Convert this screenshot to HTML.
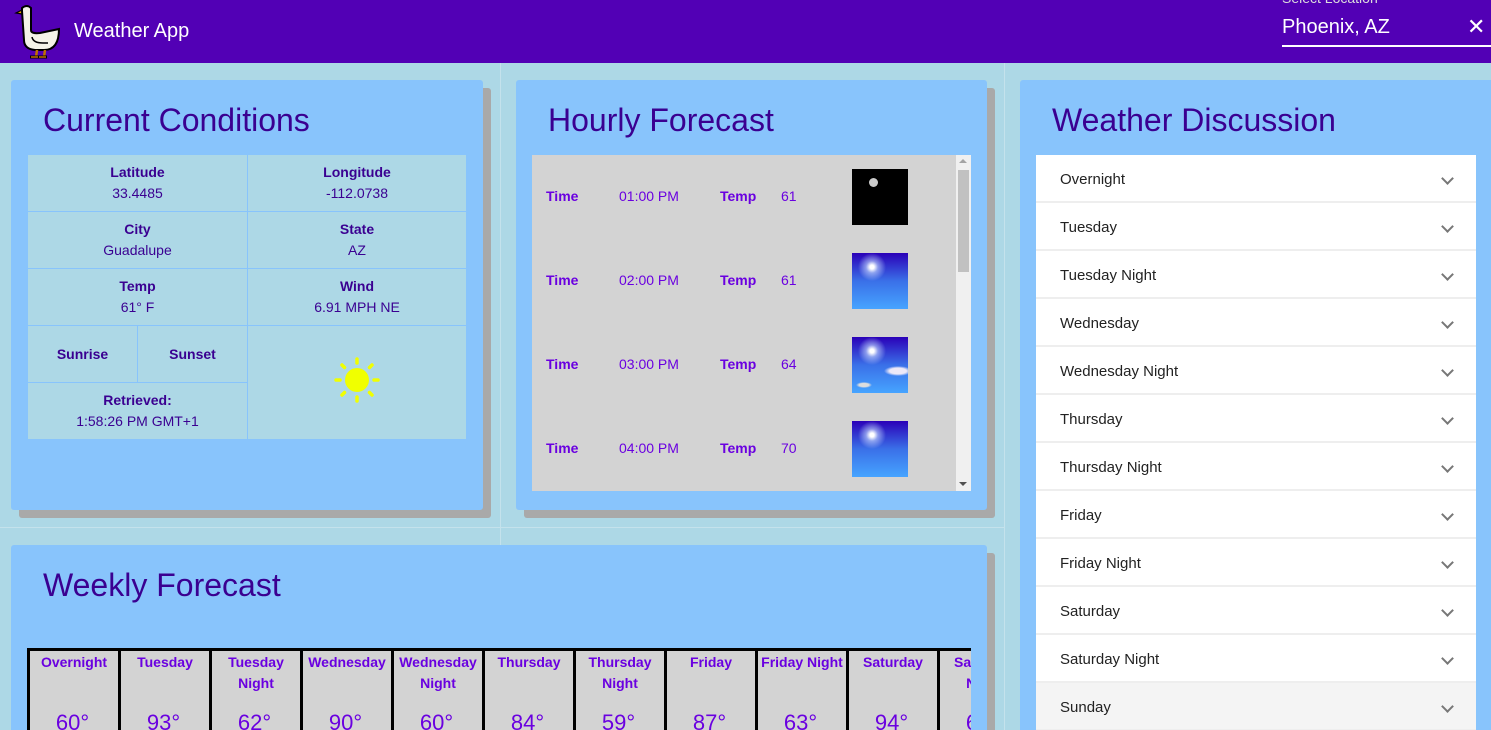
<!DOCTYPE html>
<html><head><style>
*{box-sizing:border-box;margin:0;padding:0}
html,body{width:1491px;height:730px;overflow:hidden}
body{background:#add8e6;font-family:"Liberation Sans",sans-serif;position:relative}
.hdr{position:absolute;left:0;top:0;width:1491px;height:63px;background:#5200b5;color:#fff}
.card{position:absolute;background:#88c4fc;border-radius:3px;box-shadow:8px 8px 0 #a9a9a9}
.card h2{position:absolute;left:32px;top:22px;font-weight:normal;font-size:32px;color:#3a0091}
.line{position:absolute;background:#c4e2ec}
table.cc{position:absolute;left:16px;top:74px;width:440px;border-collapse:collapse;color:#3a0091;font-size:14px;text-align:center}
table.cc td{border:1px solid #88c4fc;background:#add8e6;height:57px;line-height:21px}
b{font-weight:bold}
.hb{position:absolute;left:16px;top:75px;width:439px;height:336px;background:#d3d3d3;overflow:hidden}
.hr{position:absolute;left:0;height:56px;width:420px;font-size:14px;color:#6a00e0}
.hr span{position:absolute;top:19px}
.img{position:absolute;left:320px;top:0;width:56px;height:56px}
.sb{position:absolute;right:0;top:0;width:15px;height:336px;background:#f0f0f0}
.dl{position:absolute;left:16px;top:75px;width:440px;background:#eeeeee}
.di{height:46px;margin-bottom:2px;background:#fff;font-size:15px;color:#222;padding:16px 0 0 24px;position:relative}
.di:after{content:"";position:absolute;right:24px;top:19px;width:7px;height:7px;border-right:2px solid #777;border-bottom:2px solid #777;transform:rotate(45deg)}
.wk{position:absolute;left:16px;top:103px;width:944px;height:100px;overflow:hidden}
.wk table{border-collapse:collapse;background:#d3d3d3;border:3px solid #000}
.wk td{border:3px solid #000;width:91px;min-width:91px;vertical-align:top;text-align:center;color:#6a00e0;font-size:14px;font-weight:bold;line-height:21px;padding-top:1px;height:100px}
.wk td i{display:block;font-style:normal;font-weight:normal;font-size:22px;position:absolute;top:60px;width:85px}
.wk td div{position:relative;height:95px}
</style></head><body>
<div class="hdr">
<svg style="position:absolute;left:14px;top:3px" width="48" height="56" viewBox="0 0 48 56"><path d="M8 7 L2 10 L8 11Z" fill="#e8a000" stroke="#000" stroke-width="1.2"/><path d="M8 5 Q13 1 17 5 L17 27 Q17 31 26 30 L45 26 Q45 47 30 47 L21 47 Q10 46 10 37 L8 8Z" fill="#f4f4e8" stroke="#000" stroke-width="2"/><path d="M18 34 Q19 40 29 40 L34 40" fill="none" stroke="#000" stroke-width="1.5"/><path d="M23 47 L22 54 M31 47 L30 54" stroke="#c07000" stroke-width="2.5"/><path d="M16 54 L25 54 M24 54 L33 54" stroke="#000" stroke-width="3"/><path d="M17 54 L24 54 M25 54 L32 54" stroke="#c07000" stroke-width="1.5"/></svg>
<div style="position:absolute;left:74px;top:20px;font-size:20px">Weather App</div>
<div style="position:absolute;left:1282px;top:-10px;font-size:14px;color:#ddd">Select Location</div>
<div style="position:absolute;left:1282px;top:16px;font-size:20px">Phoenix, AZ</div>
<div style="position:absolute;left:1467px;top:14px;font-size:22px">✕</div>
<div style="position:absolute;left:1282px;top:45px;width:209px;height:2px;background:#fff"></div>
</div>
<div class="line" style="left:500px;top:63px;width:1px;height:667px"></div>
<div class="line" style="left:1004px;top:63px;width:1px;height:667px"></div>
<div class="line" style="left:0;top:527px;width:1004px;height:1px"></div>

<div class="card" style="left:11px;top:80px;width:472px;height:430px">
<h2>Current Conditions</h2>
<table class="cc">
<tr><td colspan="2"><b>Latitude</b><br>33.4485</td><td><b>Longitude</b><br>-112.0738</td></tr>
<tr><td colspan="2"><b>City</b><br>Guadalupe</td><td><b>State</b><br>AZ</td></tr>
<tr><td colspan="2"><b>Temp</b><br>61° F</td><td><b>Wind</b><br>6.91 MPH NE</td></tr>
<tr><td style="width:110px"><b>Sunrise</b></td><td style="width:110px"><b>Sunset</b></td><td rowspan="2">
<svg width="46" height="46" viewBox="0 0 46 46"><circle cx="23" cy="23" r="12" fill="#f0ff00"/><g stroke="#f0ff00" stroke-width="3.5" stroke-linecap="round"><path d="M23 2v4M23 40v4M2 23h4M40 23h4M8 8l2.5 2.5M35.5 35.5L38 38M38 8l-2.5 2.5M8 38l2.5-2.5"/></g></svg></td></tr>
<tr><td colspan="2"><b>Retrieved:</b><br>1:58:26 PM GMT+1</td></tr>
</table>
</div>

<div class="card" style="left:516px;top:80px;width:471px;height:430px">
<h2>Hourly Forecast</h2>
<div class="hb">
<div class="hr" style="top:14px"><span style="left:14px"><b>Time</b></span><span style="left:87px">01:00 PM</span><span style="left:188px"><b>Temp</b></span><span style="left:249px">61</span><div class="img" style="background:#000"><div style="position:absolute;left:17px;top:9px;width:9px;height:9px;border-radius:50%;background:#ccc"></div></div></div>
<div class="hr" style="top:98px"><span style="left:14px"><b>Time</b></span><span style="left:87px">02:00 PM</span><span style="left:188px"><b>Temp</b></span><span style="left:249px">61</span><div class="img" style="background:radial-gradient(circle at 20px 14px,#fff 2px,rgba(200,220,255,.6) 6px,transparent 14px),linear-gradient(#2a00b8,#3a70e8 50%,#46a4ff)"></div></div>
<div class="hr" style="top:182px"><span style="left:14px"><b>Time</b></span><span style="left:87px">03:00 PM</span><span style="left:188px"><b>Temp</b></span><span style="left:249px">64</span><div class="img" style="background:radial-gradient(ellipse 14px 5px at 46px 34px,#ece8f8 60%,transparent),radial-gradient(ellipse 8px 3px at 12px 48px,#ddd 60%,transparent),radial-gradient(circle at 20px 14px,#fff 2px,rgba(200,220,255,.6) 6px,transparent 14px),linear-gradient(#2a00b8,#3a70e8 50%,#46a4ff)"></div></div>
<div class="hr" style="top:266px"><span style="left:14px"><b>Time</b></span><span style="left:87px">04:00 PM</span><span style="left:188px"><b>Temp</b></span><span style="left:249px">70</span><div class="img" style="background:radial-gradient(circle at 20px 14px,#fff 2px,rgba(200,220,255,.6) 6px,transparent 14px),linear-gradient(#2a00b8,#3a70e8 50%,#46a4ff)"></div></div>
<div class="sb"><div style="position:absolute;left:2px;top:15px;width:11px;height:102px;background:#c1c1c1"></div>
<div style="position:absolute;left:3px;top:4px;border:4px solid transparent;border-bottom-color:#a3a3a3;border-top:0"></div>
<div style="position:absolute;left:3px;bottom:5px;border:4px solid transparent;border-top-color:#505050;border-bottom:0"></div></div>
</div>
</div>

<div class="card" style="left:1020px;top:80px;width:480px;height:660px">
<h2>Weather Discussion</h2>
<div class="dl">
<div class="di">Overnight</div><div class="di">Tuesday</div><div class="di">Tuesday Night</div><div class="di">Wednesday</div><div class="di">Wednesday Night</div><div class="di">Thursday</div><div class="di">Thursday Night</div><div class="di">Friday</div><div class="di">Friday Night</div><div class="di">Saturday</div><div class="di">Saturday Night</div><div class="di" style="background:#f4f4f4">Sunday</div>
</div>
</div>

<div class="card" style="left:11px;top:545px;width:976px;height:200px">
<h2>Weekly Forecast</h2>
<div class="wk"><table><tr>
<td><div>Overnight<i>60°</i></div></td><td><div>Tuesday<i>93°</i></div></td><td><div>Tuesday Night<i>62°</i></div></td><td><div>Wednesday<i>90°</i></div></td><td><div>Wednesday Night<i>60°</i></div></td><td><div>Thursday<i>84°</i></div></td><td><div>Thursday Night<i>59°</i></div></td><td><div>Friday<i>87°</i></div></td><td><div>Friday Night<i>63°</i></div></td><td><div>Saturday<i>94°</i></div></td><td><div>Saturday Night<i>64°</i></div></td>
</tr></table></div>
</div>
</body></html>
